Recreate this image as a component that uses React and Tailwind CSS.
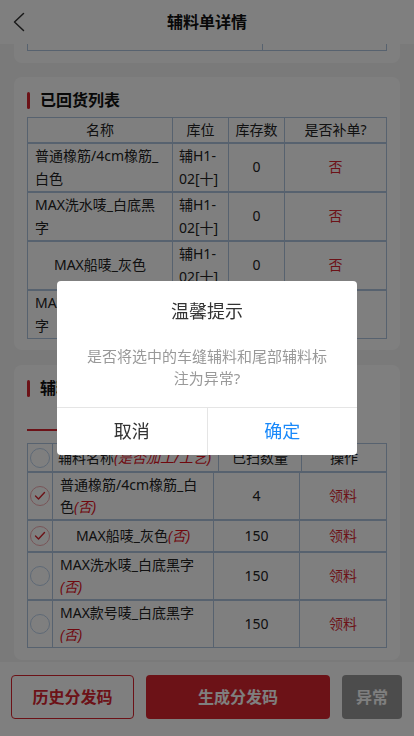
import React from 'react';

const RED = 'text-[#d9252f]';

const returnedRows = [
  { name: '普通橡筋/4cm橡筋_白色', loc: '辅H1-02[十]', stock: '0', reorder: '否' },
  { name: 'MAX洗水唛_白底黑字', loc: '辅H1-02[十]', stock: '0', reorder: '否' },
  { name: 'MAX船唛_灰色', loc: '辅H1-02[十]', stock: '0', reorder: '否' },
  { name: 'MAX款号唛_白底黑字', loc: '辅H1-02[十]', stock: '0', reorder: '否' },
];

const accessoryRows = [
  { name: '普通橡筋/4cm橡筋_白色', flag: '(否)', qty: '4', checked: true },
  { name: 'MAX船唛_灰色', flag: '(否)', qty: '150', checked: true },
  { name: 'MAX洗水唛_白底黑字', flag: '(否)', qty: '150', checked: false },
  { name: 'MAX款号唛_白底黑字', flag: '(否)', qty: '150', checked: false },
];

const SectionTitle = ({ children }) => (
  <div className="flex items-center gap-[10px] h-[22px]">
    <span className="w-[3px] h-[17px] rounded-sm bg-[#d9252f]" />
    <span className="text-[16px] leading-[22px] font-bold text-[#111]">{children}</span>
  </div>
);

const CheckCircle = ({ checked }) =>
  checked ? (
    <span className="w-5 h-5 rounded-full border border-[#f0aab0] flex items-center justify-center">
      <svg width="12" height="10" viewBox="0 0 12 10" fill="none">
        <polyline points="1.5,5 4.5,8 10.5,1.5" stroke="#d9252f" strokeWidth="1.4" strokeLinecap="round" strokeLinejoin="round" />
      </svg>
    </span>
  ) : (
    <span className="w-5 h-5 rounded-full border border-[#bcd2ec] bg-white" />
  );

const App = () => {
  return (
    <div className="relative w-full h-[736px] overflow-hidden bg-[#f5f5f5] flex flex-col text-[#222] font-['Noto_Sans','Noto_Sans_CJK_SC',sans-serif]">
      {/* Header */}
      <header className="h-[44px] shrink-0 bg-white flex items-center">
        <div className="w-[44px] pl-[13px] flex items-center">
          <svg width="12" height="20" viewBox="0 0 12 20" fill="none">
            <polyline points="10.5,1.5 1.5,10 10.5,18.5" stroke="#333" strokeWidth="1.5" strokeLinecap="round" strokeLinejoin="round" />
          </svg>
        </div>
        <h1 className="flex-1 text-center text-[16px] font-bold text-[#111]">辅料单详情</h1>
        <div className="w-[44px]" />
      </header>

      {/* Content */}
      <main className="flex-1 overflow-hidden flex flex-col">
        {/* tail of previous card */}
        <div className="mx-[14px] bg-white rounded-b-lg px-[13px] pb-[12px]">
          <div className="flex h-[7px] border-x border-b border-[#aec4df]">
            <div className="w-[235px] border-r border-[#aec4df]" />
            <div className="flex-1" />
          </div>
        </div>

        {/* 已回货列表 */}
        <section className="mt-[14px] mx-[14px] bg-white rounded-lg px-[13px] pt-[12px] pb-[11px]">
          <SectionTitle>已回货列表</SectionTitle>
          <div className="mt-[6px] text-[14px]">
            <div className="flex border border-[#aec4df] leading-[22px]">
              <div className="w-[145px] py-px text-center border-r border-[#aec4df]">名称</div>
              <div className="w-[56px] py-px text-center border-r border-[#aec4df]">库位</div>
              <div className="w-[56px] py-px text-center border-r border-[#aec4df]">库存数</div>
              <div className="flex-1 py-px text-center">是否补单?</div>
            </div>
            {returnedRows.map((r) => (
              <div key={r.name} className="flex border border-[#aec4df] leading-[22.5px]">
                <div className="w-[145px] py-px px-[7px] flex items-center justify-center border-r border-[#aec4df]">
                  <span className="break-all">{r.name}</span>
                </div>
                <div className="w-[56px] py-px px-[6px] flex items-center justify-center border-r border-[#aec4df]">
                  <span className="break-all">{r.loc}</span>
                </div>
                <div className="w-[56px] flex items-center justify-center border-r border-[#aec4df]">{r.stock}</div>
                <div className={`flex-1 flex items-center justify-center ${RED}`}>{r.reorder}</div>
              </div>
            ))}
          </div>
        </section>

        {/* 辅料列表 */}
        <section className="mt-[15px] mx-[14px] bg-white rounded-lg px-[13px] pt-[12px] pb-[12px]">
          <SectionTitle>辅料列表</SectionTitle>
          <div className="flex h-[32px] text-[14px]">
            <div className={`flex-1 text-center pt-[7px] leading-[22px] border-b-2 border-[#d9252f] ${RED}`}>车缝辅料（共4项）</div>
            <div className="flex-1 text-center pt-[7px] leading-[22px]">尾部辅料（共0项）</div>
          </div>
          <div className="mt-[12px] text-[14px]">
            <div className="flex h-[29px] border border-[#aec4df] leading-[22px]">
              <div className="w-[25px] flex items-center justify-center border-r border-[#aec4df]">
                <CheckCircle checked={false} />
              </div>
              <div className="w-[166px] px-[5px] flex items-center whitespace-nowrap border-r border-[#aec4df]">
                辅料名称<span className="italic text-[#e0101c]">(是否加工/工艺)</span>
              </div>
              <div className="w-[83px] flex items-center justify-center border-r border-[#aec4df]">已扫数量</div>
              <div className="flex-1 flex items-center justify-center">操作</div>
            </div>
            {accessoryRows.map((r) => (
              <div key={r.name} className="flex border border-[#aec4df] leading-[22px]">
                <div className="w-[25px] py-[5px] flex items-center justify-center border-r border-[#aec4df]">
                  <CheckCircle checked={r.checked} />
                </div>
                <div className="w-[161px] py-px px-[7px] flex items-center justify-center border-r border-[#aec4df]">
                  <span className="break-all">
                    {r.name}
                    <span className="italic text-[#e0101c]">{r.flag}</span>
                  </span>
                </div>
                <div className="w-[86px] flex items-center justify-center border-r border-[#aec4df]">{r.qty}</div>
                <div className={`flex-1 flex items-center justify-center ${RED}`}>领料</div>
              </div>
            ))}
          </div>
        </section>
      </main>

      {/* Bottom bar */}
      <footer className="h-[74px] shrink-0 bg-white flex items-start pt-[13px] pl-[11px] pr-[12px] gap-[12px] text-[16px] font-bold">
        <button className={`w-[123px] h-[44px] rounded-[4px] border border-[#d9252f] ${RED}`}>历史分发码</button>
        <button className="flex-1 h-[44px] rounded-[4px] bg-[#d9252f] text-white">生成分发码</button>
        <button className="w-[60px] h-[44px] rounded-[4px] bg-[#999] text-white">异常</button>
      </footer>

      {/* Dialog */}
      <div className="fixed inset-0 bg-black/50 flex items-center justify-center">
        <div className="w-[300px] bg-white rounded-[4px] overflow-hidden">
          <div className="pt-[17px] text-center text-[18px] leading-[26px] text-[#333]">温馨提示</div>
          <div className="px-[28px] pt-[21px] pb-[18px] text-center text-[15px] leading-[22px] text-[#999]">
            是否将选中的车缝辅料和尾部辅料标注为异常?
          </div>
          <div className="flex h-[48px] border-t border-[#e5e5e5] text-[18px]">
            <button className="flex-1 border-r border-[#e5e5e5] text-[#333]">取消</button>
            <button className="flex-1 text-[#1989fa]">确定</button>
          </div>
        </div>
      </div>
    </div>
  );
};

export default App;
